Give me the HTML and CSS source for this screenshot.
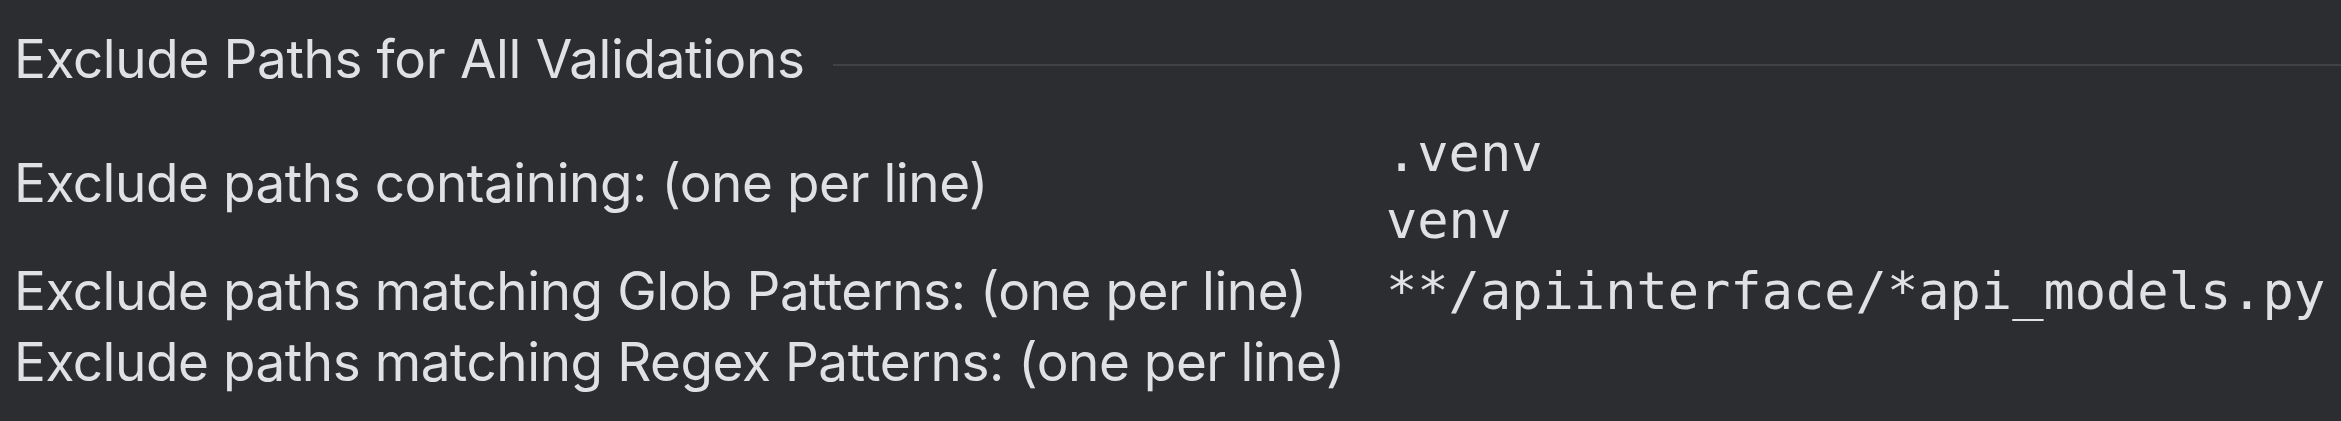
FILE: index.html
```html
<!DOCTYPE html>
<html lang="en">
<head>
<meta charset="utf-8">
<title>Exclude Paths for All Validations</title>
<link rel="stylesheet" href="styles.css">
</head>
<body>
<div class="panel">
  <div class="section-title">
    <span class="title-text">Exclude Paths for All Validations</span>
    <span class="title-line"></span>
  </div>
  <div class="form">
    <div class="label label-first">Exclude paths containing: (one per line)</div>
    <div class="value"><div class="line">.venv</div><div class="line">venv</div></div>
    <div class="label">Exclude paths matching Glob Patterns: (one per line)</div>
    <div class="value"><div class="line">**/apiinterface/*api_models.py</div></div>
    <div class="label">Exclude paths matching Regex Patterns: (one per line)</div>
    <div class="value"><div class="line"></div></div>
  </div>
</div>
</body>
</html>
```
FILE: styles.css
```css
html, body {
  margin: 0;
  padding: 0;
  background: #2b2d30;
}
body {
  width: 2341px;
  height: 421px;
  overflow: hidden;
  color: #dfe1e5;
  font-family: Inter, "Noto Sans", sans-serif;
}
.panel {
  padding: 26px 0 0 14px;
}
.section-title {
  display: flex;
  align-items: center;
  gap: 28px;
  height: 67px;
  font-size: 53px;
  line-height: 67px;
  letter-spacing: -0.35px;
}
.title-text {
  white-space: nowrap;
}
.title-line {
  flex: 1;
  height: 2px;
  background: #404246;
  margin-top: 10px;
}
.form {
  margin-top: 27px;
  display: grid;
  grid-template-columns: 1372px 1fr;
  row-gap: 4px;
}
.label {
  font-size: 53px;
  line-height: 67px;
  letter-spacing: -0.42px;
  white-space: nowrap;
}
.label-first {
  align-self: center;
  margin-bottom: 8px;
}
.value {
  font-family: "DejaVu Sans Mono", "Liberation Mono", monospace;
  font-size: 52px;
  line-height: 67px;
  white-space: pre;
}
.line {
  height: 67px;
}
```
